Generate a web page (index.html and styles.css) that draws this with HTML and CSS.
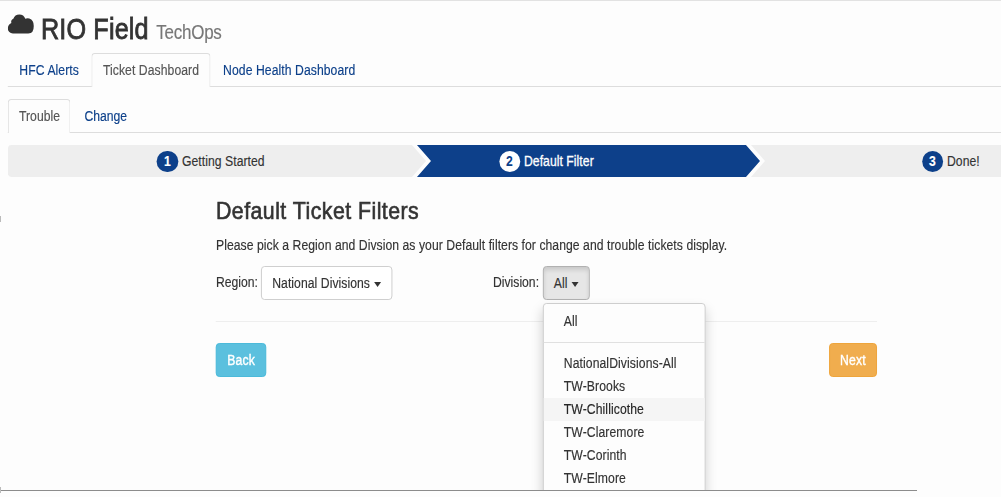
FILE: index.html
```
<!DOCTYPE html>
<html lang="en">
<head>
<meta charset="utf-8">
<title>RIO Field TechOps</title>
<link rel="stylesheet" href="styles.css">
</head>
<body>
<div class="frame">
<div class="page">
  <header class="brand">
    <svg class="cloud" viewBox="0 0 26 20" preserveAspectRatio="none"><path d="M5 19.500A5 5 0 0 1 0 14.500Q0 10.500 3.500 9A3.500 3.500 0 0 1 5.500 4.800Q7 0.500 11.500 0.500Q16 0.500 17.500 4.800Q19 3.900 21.500 4.500Q26 6 26 12Q26 19.500 20.500 19.500Z"/></svg>
    <h1 class="brand-name">RIO Field</h1>
    <small class="brand-sub">TechOps</small>
  </header>
  <nav class="tabs">
    <a class="tab">HFC Alerts</a>
    <a class="tab active">Ticket Dashboard</a>
    <a class="tab">Node Health Dashboard</a>
  </nav>
  <nav class="tabs tabs-sub">
    <a class="tab active">Trouble</a>
    <a class="tab">Change</a>
  </nav>
  <div class="wizard">
    <div class="step first"><span class="badge">1</span>Getting Started</div>
    <div class="step current"><span class="badge">2</span>Default Filter</div>
    <div class="step last"><span class="badge">3</span>Done!</div>
  </div>
  <main class="content">
    <h2 class="title">Default Ticket Filters</h2>
    <p class="intro">Please pick a Region and Divsion as your Default filters for change and trouble tickets display.</p>
    <div class="filters">
      <div class="field region">
        <span class="label">Region:</span>
        <button class="btn">National Divisions<i class="caret"></i></button>
      </div>
      <div class="field">
        <span class="label">Division:</span>
        <div class="dropdown">
          <button class="btn open">All<i class="caret"></i></button>
          <ul class="menu">
            <li class="item">All</li>
            <li class="divider"></li>
            <li class="item">NationalDivisions-All</li>
            <li class="item">TW-Brooks</li>
            <li class="item hover">TW-Chillicothe</li>
            <li class="item">TW-Claremore</li>
            <li class="item">TW-Corinth</li>
            <li class="item">TW-Elmore</li>
          </ul>
        </div>
      </div>
    </div>
    <div class="actions">
      <button class="btn back">Back</button>
      <button class="btn next">Next</button>
    </div>
  </main>
</div>
</div>
<div class="bottom-rule"></div>
<i class="tick tick-mid"></i>
<i class="tick tick-low"></i>
</body>
</html>
```
FILE: styles.css
```
* { box-sizing: border-box; }
/* --u is one screen pixel inside the horizontally condensed page */
:root { --squeeze: 0.87; --u: calc(1px / 0.87); }
body { margin: 0; height: 497px; overflow: hidden; background: #fdfdfd; position: relative; }
.frame { width: 100%; height: 490px; overflow: hidden; }
.page {
  width: calc(var(--u) * 1001);
  height: 490px;
  overflow: hidden;
  transform: scaleX(var(--squeeze));
  transform-origin: 0 0;
  padding-left: calc(var(--u) * 8);
  border-top: 1px solid #e2e2e2;
  font: 14px/20px "Liberation Sans", Arial, sans-serif;
  letter-spacing: .06px;
  -webkit-text-stroke: .15px;
  color: #333;
}
.brand { display: flex; align-items: baseline; height: 52px; padding-top: 10px; }
.cloud { width: calc(var(--u) * 26); height: 20px; fill: #333; align-self: flex-start; margin-top: 3px; }
.brand-name { margin: 0 0 0 calc(var(--u) * 7); font-size: 29px; line-height: 36px; font-weight: 400; letter-spacing: .15px; -webkit-text-stroke: .8px #333; white-space: nowrap; }
.brand-sub { margin-left: calc(var(--u) * 7.500); font-size: 19.5px; letter-spacing: -.25px; color: #777; }
.tabs { display: flex; height: 34px; border-bottom: 1px solid #ddd; }
.tabs-sub { margin-top: 12px; }
.tab { height: 34px; padding: 6px calc(var(--u) * 10.500) 0; margin-right: calc(var(--u) * 1.300); border: 1px solid transparent; border-bottom: 0; border-radius: 4px 4px 0 0; color: #0d408a; letter-spacing: .08px; white-space: nowrap; }
.tab.active { color: #555; background: #fdfdfd; border-color: #ddd; }
.tabs-sub .tab { padding-left: calc(var(--u) * 10.200); padding-right: calc(var(--u) * 10); letter-spacing: 0; }
.tabs-sub .tab + .tab { padding-left: calc(var(--u) * 11.500); }
.wizard { display: flex; height: 32px; margin-top: 12px; }
.step { display: flex; align-items: center; flex: none; background: #eee; white-space: nowrap; }
.first { width: calc(var(--u) * 418); padding-left: calc(var(--u) * 149); border-radius: 4px 0 0 4px; clip-path: polygon(0 0, calc(100% - 14px / .87) 0, 100% 50%, calc(100% - 14px / .87) 100%, 0 100%); }
.current { width: calc(var(--u) * 343); margin-left: calc(var(--u) * -9); padding-left: calc(var(--u) * 82); background: #0d408a; color: #fff; -webkit-text-stroke: .3px #fff; clip-path: polygon(0 0, calc(100% - 14px / .87) 0, 100% 50%, calc(100% - 14px / .87) 100%, 0 100%, calc(14px / .87) 50%); }
.last { width: calc(var(--u) * 250); margin-left: calc(var(--u) * -9); padding-left: calc(var(--u) * 171); clip-path: polygon(0 0, 100% 0, 100% 100%, 0 100%, calc(14px / .87) 50%); }
.badge { width: calc(var(--u) * 21); height: 21px; margin-right: calc(var(--u) * 4); border-radius: 50%; background: #0d408a; color: #fff; font-weight: 700; font-size: 14px; line-height: 21px; text-align: center; }
.current .badge { background: #fff; color: #0d408a; -webkit-text-stroke: 0; }
.content { width: calc(var(--u) * 661); margin-left: calc(var(--u) * 208); padding-top: 21px; }
.title { margin: 0; font-size: 24.5px; line-height: 26px; font-weight: 400; letter-spacing: .53px; -webkit-text-stroke: .65px #333; }
.intro { margin: 11px 0 0; white-space: nowrap; }
.filters { display: flex; height: 67px; padding-top: 11px; border-bottom: 1px solid #eee; }
.region { width: calc(var(--u) * 277); }
.field { display: flex; align-items: flex-start; white-space: nowrap; }
.label { margin: 6px calc(var(--u) * 3.500) 0 0; letter-spacing: 0; }
.region .label { margin-right: calc(var(--u) * 3); }
.dropdown { position: relative; }
.btn { display: flex; align-items: center; height: 34px; padding: 0 calc(var(--u) * 10.400); border: 1px solid #ccc; border-radius: 4px; background: #fff; color: #333; font: inherit; letter-spacing: .06px; white-space: nowrap; }
.open { background: #e6e6e6; border-color: #adadad; box-shadow: inset 0 3px 5px rgba(0,0,0,.125); }
.caret { margin: 2px 0 0 calc(var(--u) * 4); border-top: 5px solid #333; border-left: calc(var(--u) * 4) solid transparent; border-right: calc(var(--u) * 4) solid transparent; }
.menu { position: absolute; z-index: 2; top: 37px; left: 0; width: calc(var(--u) * 163); height: 200px; margin: 0; padding: 6px 0; list-style: none; background: #fdfdfd; border: 1px solid #ccc; border-radius: 4px; box-shadow: 0 6px 12px rgba(0,0,0,.175); letter-spacing: .1px; }
.item { height: 23px; line-height: 23px; padding-left: calc(var(--u) * 20.400); }
.hover { background: #f5f5f5; color: #262626; }
.divider { height: 1px; margin: 9px 0; background: #e0e0e0; }
.actions { display: flex; justify-content: space-between; padding-top: 21px; }
.back, .next { color: #fff; letter-spacing: .2px; -webkit-text-stroke: .4px #fff; }
.back { background: #5bc0de; border-color: #46b8da; }
.next { background: #f0ad4e; border-color: #eea236; }
.bottom-rule { width: 917px; height: 1px; background: #8c8c8c; }
.tick { position: absolute; left: 0; width: 1px; height: 6px; background: #bbb; }
.tick-mid { top: 216px; }
.tick-low { top: 487px; }
```
